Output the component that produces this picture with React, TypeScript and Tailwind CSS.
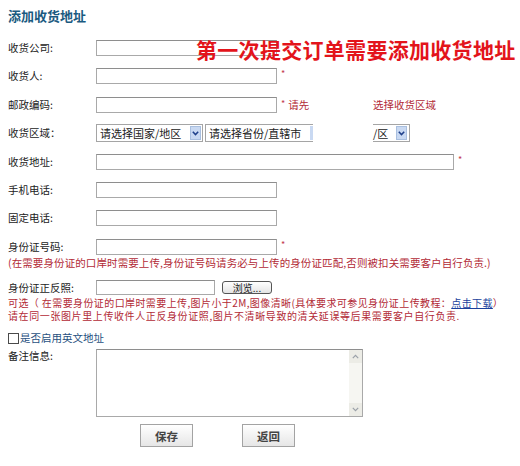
import React from "react";

function Box({ w }: { w: string }) {
  return <div className={`${w} h-full border border-[#a9a9a9] border-t-[#8e8e8e] bg-white`} />;
}

function Star() {
  return <span className="ml-[4px] self-start text-[9px] leading-[12px] text-[#c23a4e]">*</span>;
}

function Arrow() {
  return (
    <div className="flex h-[14px] w-[11px] items-center justify-center border border-[#a9bfdf] bg-[#c9d9f2]">
      <svg width="7" height="5" viewBox="0 0 7 5">
        <path d="M0.8 0.8 L3.5 3.6 L6.2 0.8" fill="none" stroke="#1e3f8a" strokeWidth="1.5" />
      </svg>
    </div>
  );
}

function Label({ children }: { children: React.ReactNode }) {
  return <div className="w-[88px] shrink-0 whitespace-nowrap text-[10.5px] leading-[14px] text-[#222]">{children}</div>;
}

export default function App() {
  return (
    <div className="relative h-[466px] w-[520px] overflow-hidden bg-white pl-[8px] font-['Noto_Sans_CJK_SC','Liberation_Sans',sans-serif] text-[#222]">
      <div className="mt-[8px] h-[16px] text-[13px] font-bold leading-[16px] text-[#1a5a80]">添加收货地址</div>

      <div className="mt-[16px] flex h-[16px] items-center">
        <Label>收货公司:</Label>
        <Box w="w-[181px]" />
      </div>

      <div className="mt-[12px] flex h-[16px] items-center">
        <Label>收货人:</Label>
        <Box w="w-[181px]" />
        <Star />
      </div>

      <div className="mt-[13px] flex h-[16px] items-center">
        <Label>邮政编码:</Label>
        <Box w="w-[181px]" />
        <div className="ml-[4px] flex w-[92px] items-center whitespace-nowrap text-[10.5px] leading-[14px] text-[#b22a36]">
          <span className="self-start text-[9px] leading-[12px] text-[#c23a4e]">*</span>
          <span className="ml-[3px]">请先</span>
        </div>
        <span className="whitespace-nowrap text-[10.5px] leading-[14px] text-[#b22a36]">选择收货区域</span>
      </div>

      <div className="mt-[11px] flex h-[18px] items-center">
        <Label>收货区域：</Label>
        <div className="flex h-full w-[107px] items-center border border-[#a5a5a5] bg-white pl-[3px] pr-[1px]">
          <span className="flex-1 whitespace-nowrap text-[11px] leading-[14px] text-[#222]">请选择国家/地区</span>
          <Arrow />
        </div>
        <div className="ml-[2px] flex h-full w-[108px] items-center overflow-hidden border border-r-0 border-[#a5a5a5] bg-white pl-[3px]">
          <span className="flex-1 whitespace-nowrap text-[11px] leading-[14px] text-[#222]">请选择省份/直辖市</span>
          <div className="h-[14px] w-[3px] bg-[#c9d9f2]" />
        </div>
        <div className="ml-[60px] flex h-full w-[37px] items-center border border-l-0 border-[#a5a5a5] bg-white pr-[2px]">
          <span className="flex-1 whitespace-nowrap text-[11px] leading-[14px] text-[#222]">/区</span>
          <Arrow />
        </div>
      </div>

      <div className="mt-[12px] flex h-[16px] items-center">
        <Label>收货地址:</Label>
        <Box w="w-[358px]" />
        <Star />
      </div>

      <div className="mt-[12px] flex h-[16px] items-center">
        <Label>手机电话:</Label>
        <Box w="w-[181px]" />
      </div>

      <div className="mt-[12px] flex h-[16px] items-center">
        <Label>固定电话:</Label>
        <Box w="w-[181px]" />
      </div>

      <div className="mt-[13px] flex h-[16px] items-center">
        <Label>身份证号码:</Label>
        <Box w="w-[181px]" />
        <Star />
      </div>

      <div className="mt-[1px] h-[14px] whitespace-nowrap text-[10.5px] leading-[14px] tracking-[0.1px] text-[#b22a36]">
        (在需要身份证的口岸时需要上传,身份证号码请务必与上传的身份证匹配,否则被扣关需要客户自行负责.)
      </div>

      <div className="mt-[10px] flex h-[15px] items-center">
        <Label>身份证正反照:</Label>
        <Box w="w-[119px]" />
        <div className="ml-[7px] flex h-[13px] w-[50px] items-center justify-center rounded-[3px] border border-[#555] bg-gradient-to-b from-white to-[#e4e4e4] text-[10px] leading-[12px] text-[#222]">
          浏览...
        </div>
      </div>

      <div className="mt-[1px] flex h-[13px] items-center whitespace-nowrap text-[10px] leading-[13px] tracking-[0.4px] text-[#b22a36]">
        <span>可选（ 在需要身份证的口岸时需要上传,图片小于2M,图像清晰(具体要求可参见身份证上传教程：</span>
        <span className="text-[#1b3f9c] underline">点击下载</span>
        <span>）</span>
      </div>
      <div className="h-[13px] whitespace-nowrap text-[10px] leading-[13px] tracking-[0.6px] text-[#b22a36]">
        请在同一张图片里上传收件人正反身份证照,图片不清晰导致的清关延误等后果需要客户自行负责.
      </div>

      <div className="mt-[9px] flex h-[14px] items-center">
        <div className="h-[11px] w-[11px] border border-[#4a4a4a] bg-white" />
        <span className="ml-[1px] whitespace-nowrap text-[10.5px] leading-[14px] text-[#27507e]">是否启用英文地址</span>
      </div>

      <div className="mt-[4px] flex h-[68px]">
        <Label>备注信息:</Label>
        <div className="flex h-full w-[267px] border border-[#a9a9a9] border-t-[#8e8e8e] bg-white">
          <div className="flex-1" />
          <div className="flex w-[13px] flex-col justify-between bg-[#f6f6f2]">
            <div className="flex h-[13px] items-center justify-center bg-[#ecece6]">
              <svg width="7" height="5" viewBox="0 0 7 5">
                <path d="M0.8 4.2 L3.5 1.4 L6.2 4.2" fill="none" stroke="#9aa0a8" strokeWidth="1.2" />
              </svg>
            </div>
            <div className="flex h-[13px] items-center justify-center bg-[#ecece6]">
              <svg width="7" height="5" viewBox="0 0 7 5">
                <path d="M0.8 0.8 L3.5 3.6 L6.2 0.8" fill="none" stroke="#9aa0a8" strokeWidth="1.2" />
              </svg>
            </div>
          </div>
        </div>
      </div>

      <div className="mt-[7px] flex h-[23px] pl-[132px]">
        <div className="flex h-full w-[53px] items-center justify-center border border-[#a3a3a3] bg-gradient-to-b from-white to-[#e6e6e6] text-[11.5px] font-bold leading-[14px] text-[#444]">
          保存
        </div>
        <div className="ml-[49px] flex h-full w-[53px] items-center justify-center border border-[#a3a3a3] bg-gradient-to-b from-white to-[#e6e6e6] text-[11.5px] font-bold leading-[14px] text-[#444]">
          返回
        </div>
      </div>

      <div className="absolute left-[196px] top-[36px] whitespace-nowrap text-[21px] font-bold leading-[26px] tracking-[0.3px] text-[#e3141b]">
        第一次提交订单需要添加收货地址
      </div>
    </div>
  );
}
